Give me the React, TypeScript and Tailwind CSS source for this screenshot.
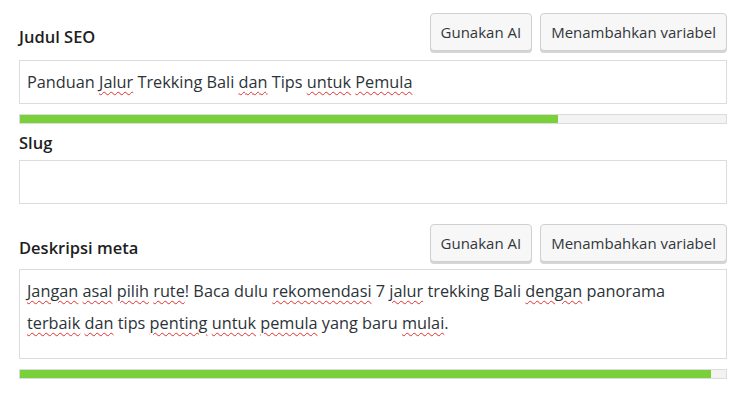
import React from "react";

const W = ({ children }: { children: React.ReactNode }) => (
  <span className="underline decoration-wavy decoration-[#e0312f] decoration-1 underline-offset-[3px]">{children}</span>
);

const Btn = ({ children }: { children: React.ReactNode }) => (
  <button className="h-[38px] px-[10px] rounded-[4px] border border-[#d0d0d0] bg-[#f7f7f7] text-[#32373c] shadow-[0_2px_0_#d5d5d5] text-[15px] leading-none">
    {children}
  </button>
);

const Bar = ({ pct }: { pct: number }) => (
  <div className="h-[10px] border border-[#dcdcdc] bg-[#f3f3f3]">
    <div className="h-full bg-[#7ad03a]" style={{ width: `${pct}%` }} />
  </div>
);

export default function App() {
  return (
    <div className="w-[746px] h-[397px] bg-white px-[19px] pt-[13px] text-[#2c3338]" style={{ fontFamily: '"Open Sans", "Noto Sans", sans-serif' }}>
      <div className="flex items-end justify-between">
        <div className="text-[16.5px] font-semibold text-[#1e1e1e] pb-[1px]">Judul SEO</div>
        <div className="flex gap-[8px]">
          <Btn>Gunakan AI</Btn>
          <Btn>Menambahkan variabel</Btn>
        </div>
      </div>
      <div className="mt-[9px] h-[44px] border border-[#dcdcdc] flex items-center px-[7px] text-[16.3px]">
        <span>
          Panduan <W>Jalur</W> Trekking Bali <W>dan</W> Tips <W>untuk</W> <W>Pemula</W>
        </span>
      </div>
      <div className="mt-[10px]">
        <Bar pct={76.2} />
      </div>
      <div className="mt-[8px] text-[16.5px] font-semibold text-[#1e1e1e] leading-[22px]">Slug</div>
      <div className="mt-[6px] h-[44px] border border-[#dcdcdc]" />
      <div className="mt-[20px] flex items-end justify-between">
        <div className="text-[16.5px] font-semibold text-[#1e1e1e] pb-[1px]">Deskripsi meta</div>
        <div className="flex gap-[8px]">
          <Btn>Gunakan AI</Btn>
          <Btn>Menambahkan variabel</Btn>
        </div>
      </div>
      <div className="mt-[7px] h-[90px] border border-[#dcdcdc] px-[7px] pt-[5px] text-[16.3px] leading-[32px]">
        <W>Jangan</W> <W>asal</W> <W>pilih</W> <W>rute</W>! Baca dulu <W>rekomendasi</W> 7 <W>jalur</W> trekking Bali <W>dengan</W> panorama
        <br />
        <W>terbaik</W> <W>dan</W> tips <W>penting</W> <W>untuk</W> <W>pemula</W> yang baru <W>mulai</W>.
      </div>
      <div className="mt-[10px]">
        <Bar pct={97.9} />
      </div>
    </div>
  );
}
